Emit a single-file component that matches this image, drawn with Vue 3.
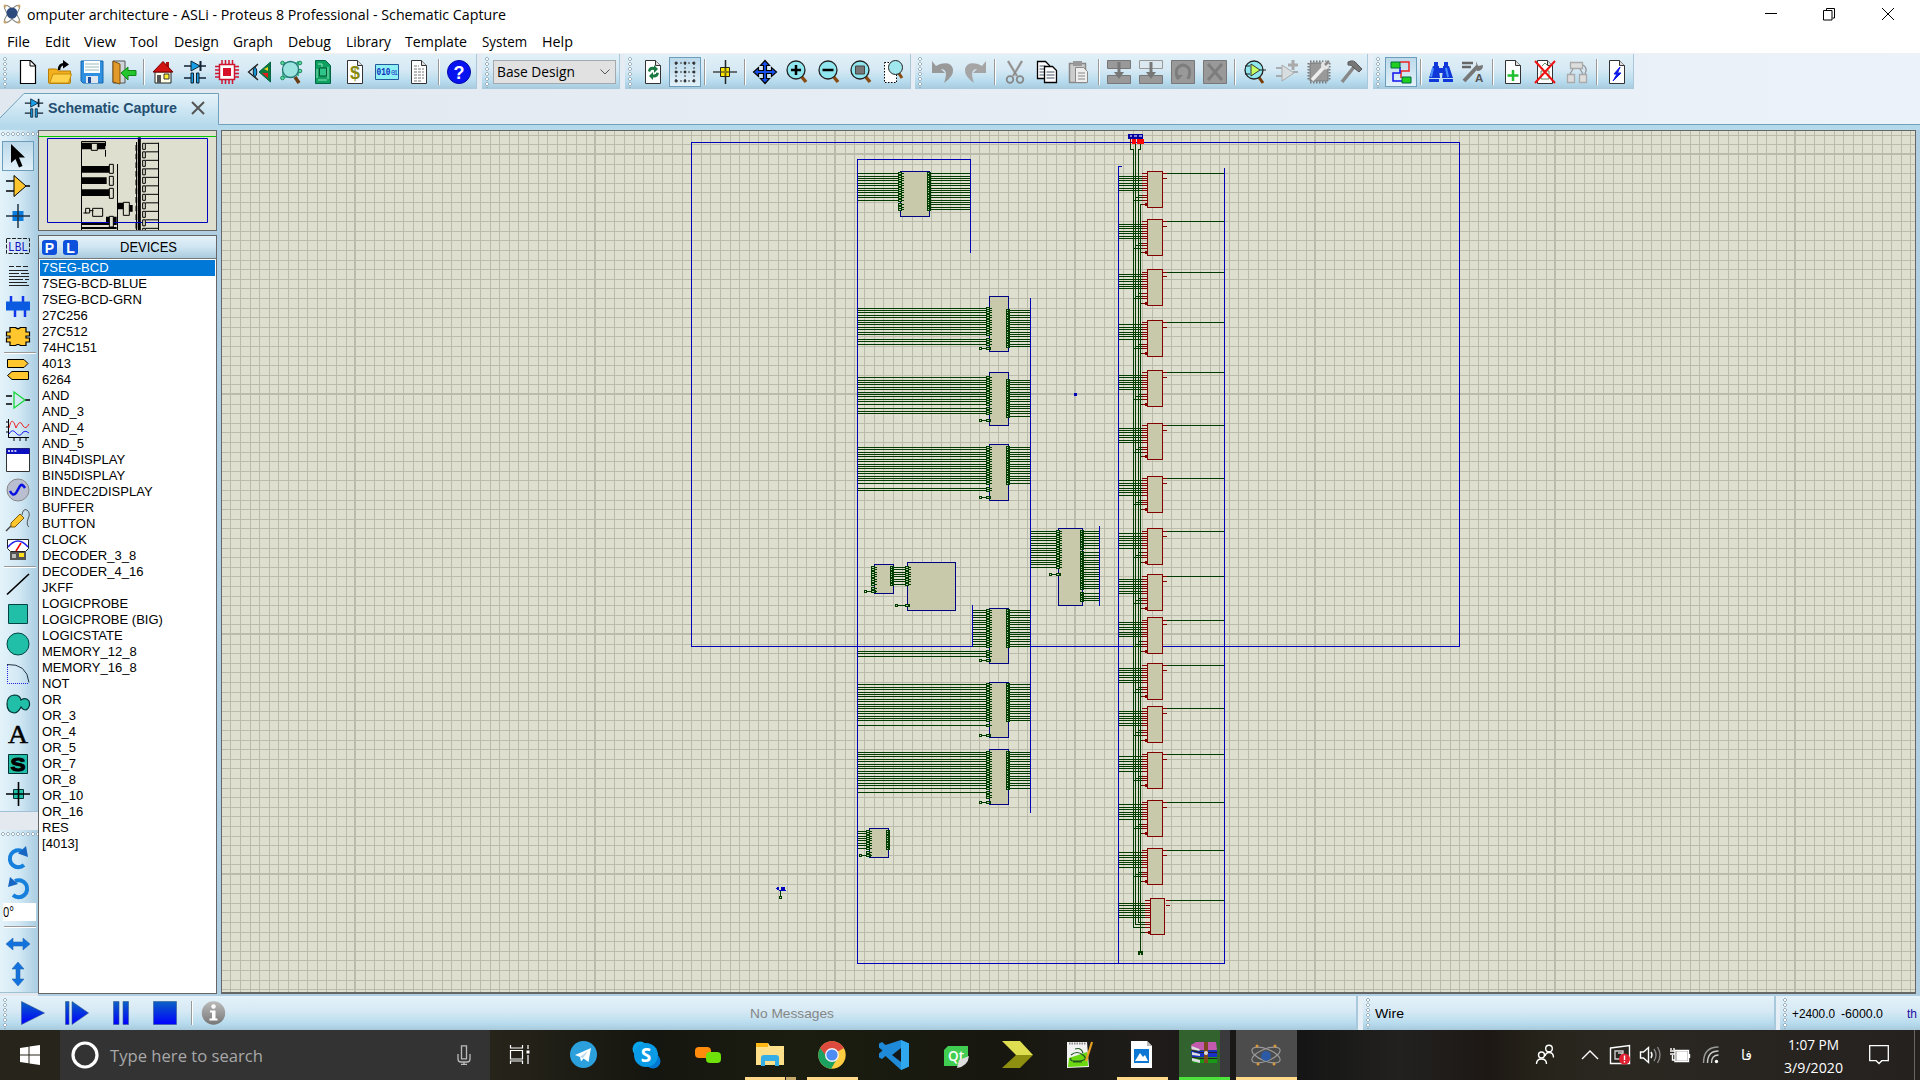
<script setup>
import { h } from 'vue'

// Single line of text set to an exact advance width
const Fit = (p) =>
  h('svg', { width: p.w, height: p.h, style: 'display:block;overflow:visible;flex:none' }, [
    h('text', {
      x: 0, y: p.b, textLength: p.w, lengthAdjust: 'spacingAndGlyphs', fill: p.c || '#000',
      'font-size': p.s, 'font-weight': p.bold ? 700 : 400,
      'font-family': p.arial ? '"Liberation Sans", sans-serif' : '"Open Sans", "Noto Sans", sans-serif'
    }, p.t)
  ])
Fit.props = { w: Number, h: Number, b: Number, s: Number, t: String, c: String, bold: Boolean, arial: Boolean }

const page = '<path d="M4.5 .5h10l5 5v18h-15z" fill="#fff" stroke="#333"/><path d="M14.500 .5v5h5" fill="#ddd" stroke="#333"/>'
const lens = (inner, c = '#8fe6ee') => `<path d="M16 16l5 6" stroke="#8a4b10" stroke-width="3.500"/><circle cx="11" cy="10" r="9" fill="${c}" stroke="#222" stroke-width="1.300"/>${inner}`
const block = (m) => `<path d="M.5 .5h23v23h-23z" fill="#999" stroke="#777"/>${m}`

const icons = {
  new: '<path d="M4.500 .5h10l5 5v18h-15z" fill="#fff" stroke="#000" stroke-width="1.200"/><path d="M14 .5v5.500h5.500" fill="none" stroke="#000"/>',
  open: '<path d="M.5 22V9h8l2 2h12v11q0 1.500-1.500 1.500h-19Q.5 23.500.5 22z" fill="#f2b01c" stroke="#b97d09"/><path d="M2 22l3-8h18.500l-3 9H2z" fill="#ffd24a" stroke="#c48a10"/><path d="M11 10Q11 4 17 4" fill="none" stroke="#000" stroke-width="2.500"/><path d="M15 0l6 4.500-6 4z" fill="#000"/>',
  save: '<path d="M1 1h22v22H3l-2-2z" fill="#2f8fe0" stroke="#1667ad"/><path d="M4 1h16v12H4z" fill="#fff"/><path d="M5 4h14M5 7h14M5 10h14" stroke="#9bb"/><path d="M6 16h12v7H6z" fill="#dfe6ee"/><path d="M8 17h3v6H8z" fill="#1c4fa0"/>',
  exit: '<path d="M1 1h12v22H1z" fill="#cfd6d9" stroke="#555"/><path d="M1 1l7 3v20l-7-2z" fill="#e39a2b" stroke="#7d5312"/><path d="M9 13l7-6v3.500h8v5h-8V20z" fill="#25c52d" stroke="#128418"/>',
  home: '<path d="M4 12h16v11H4z" fill="#ffffe8" stroke="#222"/><path d="M15 2h3v6h-3z" fill="#b01010"/><path d="M2 12L12 1.500 22 12z" fill="#d21313" stroke="#700"/><path d="M6 15h4v8H6z" fill="#555"/><path d="M13 14h5v5h-5z" fill="#ffee30" stroke="#333"/>',
  sch: '<path d="M1 6h22M1 18h7M16 18h7" stroke="#123" stroke-width="1.500"/><path d="M8 1l9 5-9 5z" fill="#17a0e8" stroke="#123"/><path d="M17.500 1v10" stroke="#123" stroke-width="2"/><path d="M8 13h2.500v10H8zM13.500 13H16v10h-2.500z" fill="#17a0e8" stroke="#123"/>',
  pcb: '<path d="M7 0v24M10.500 0v24M14 0v24M17.500 0v24M0 6.500h24M0 10h24M0 13.500h24M0 17h24" stroke="#d01530" stroke-width="1.500"/><path d="M4.500 4.500h15v15h-15z" fill="#fff" stroke="#d01530" stroke-width="1.500"/><path d="M8 8h8v8H8z" fill="#d8112b"/>',
  view3d: '<path d="M11 4L1.500 12l9.500 8" fill="none" stroke="#222" stroke-width="1.300"/><path d="M10 5q-6 7 0 14" fill="#e8f4fa" stroke="#222"/><ellipse cx="8" cy="12" rx="1.800" ry="4.500" fill="#1797d8" stroke="#123"/><path d="M12 12L23.500 2v20z" fill="#0d7a3c" stroke="#064"/><path d="M15 13h6v5z" fill="#e61919"/><path d="M17 9l4-2v4z" fill="#e8d422"/>',
  pcblens: '<path d="M2 3h19M3 17h12M4 8v8M19 1v15" stroke="#2a7" stroke-width="1.500"/><g fill="#5d9" stroke="#286"><circle cx="3.500" cy="3" r="1.800"/><circle cx="21" cy="3" r="1.800"/><circle cx="3.500" cy="18" r="1.800"/><circle cx="21" cy="11" r="1.800"/></g><path d="M16 17l4 6" stroke="#6a3b10" stroke-width="3.500"/><circle cx="11.500" cy="9.500" r="8" fill="#9de4e0" stroke="#277" stroke-width="1.300"/>',
  board: '<path d="M4.500 .5h10l5 5v18h-15z" fill="#10a060" stroke="#064"/><path d="M8.500 8h7v8h-7z" fill="#2fc488" stroke="#053"/><path d="M7 4h4v3M17 7v12M7 20h9M6 9v9" fill="none" stroke="#8fe8c0"/>',
  bom: page + '<text x="12" y="19" text-anchor="middle" font-family="Liberation Sans" font-weight="700" font-size="18" fill="#8a8a10">$</text>',
  bin: '<path d="M.5 4.500h23v15H.5z" fill="#8ff0f5" stroke="#245a9a"/><text x="1.500" y="15" textLength="14" lengthAdjust="spacingAndGlyphs" font-family="Liberation Mono" font-weight="700" font-size="10" fill="#1030c0">010</text><text x="16" y="15" textLength="7" font-family="Liberation Mono" font-size="7" fill="#1030c0">01</text>',
  notes: page + '<path d="M7 6h5M7 9h10M7 12h10M7 15h10M7 18h10M7 21h8" stroke="#777" stroke-dasharray="3 1"/>',
  help: '<circle cx="12" cy="12" r="11.500" fill="#0714f0" stroke="#0508a8"/><text x="12" y="18.500" text-anchor="middle" font-family="Liberation Sans" font-weight="700" font-size="18" fill="#fff">?</text>',
  refresh: page + '<path d="M7 11q1-5 6-4V5l4 4-4 4v-3q-3-1-4 2z" fill="#187a40"/><path d="M18 13q-1 5-6 4.500V20l-4-4 4-4v2.500q3 .5 3.500-2z" fill="#187a40"/>',
  grid: '<path d="M3 3h18M3 12h18M3 21h18M3 3v18M12 3v18M21 3v18" fill="none" stroke="#333" stroke-dasharray="2 2"/><path d="M3 1.500v3M12 1.500v3M21 1.500v3M3 10.500v3M12 10.500v3M21 10.500v3M3 19.500v3M12 19.500v3M21 19.500v3M1.500 3h3M10.500 3h3M19.500 3h3M1.500 12h3M10.500 12h3M19.500 12h3M1.500 21h3M10.500 21h3M19.500 21h3" stroke="#222" stroke-width="1.200"/>',
  origin: '<path d="M7.500 7.500h9v9h-9z" fill="#ffe800" stroke="#222"/><path d="M12.500 0v24" stroke="#222" stroke-width="1.500"/><path d="M0 12h24" stroke="#444" stroke-width="1.500"/><path d="M12 8v8M8 12h8" stroke="#a90"/>',
  pan: '<path d="M12 .5l4.500 5h-3v5h5v-3l5 4.500-5 4.500v-3h-5v5h3L12 23.500l-4.500-5h3v-5h-5v3L.5 12l5-4.500v3h5v-5h-3z" fill="#1650e8" stroke="#000" stroke-width="1.200"/>',
  zin: lens('<path d="M11 5v10M6 10h10" stroke="#000" stroke-width="2.500"/>'),
  zout: lens('<path d="M5.500 10h11" stroke="#000" stroke-width="2.500"/>'),
  zall: lens('<path d="M6.500 6h9v8h-9z" fill="#777" stroke="#444"/>'),
  zarea: '<path d="M3.500 2.500h12v20h-12z" fill="#fff" stroke="#000" stroke-dasharray="1.500 1.500"/><path d="M17 12l4 6" stroke="#8a4b10" stroke-width="3"/><circle cx="14.500" cy="7.500" r="7" fill="#a0e8ee" stroke="#222"/>',
  undo: '<path d="M1 1v12h13l-4-4q8 0 3 14 10-7 9-14-2-8-13-5L5 6z" fill="#999"/>',
  redo: '<path d="M23 1v12H10l4-4q-8 0-3 14Q1 16 2 9q2-8 13-5l4 2z" fill="#a5a5a5"/>',
  cut: '<path d="M5 1l9 15M19 1l-9 15" stroke="#aaa" stroke-width="2.500"/><path d="M5 1l9 15M19 1l-9 15" stroke="#777" stroke-width=".7"/><circle cx="7" cy="19.500" r="3.300" fill="none" stroke="#888" stroke-width="1.800"/><circle cx="17" cy="19.500" r="3.300" fill="none" stroke="#888" stroke-width="1.800"/>',
  copy: '<path d="M2.500 1.500h8l4 4v13h-12z" fill="#fff" stroke="#000" stroke-width="1.300"/><path d="M4.500 6h6M4.500 9h5M4.500 12h5M4.500 15h5" stroke="#456"/><path d="M9.500 6.500h8l4 4v12h-12z" fill="#fff" stroke="#000" stroke-width="1.300"/><path d="M11.500 12h8M11.500 15h8M11.500 18h8" stroke="#456"/>',
  paste: '<path d="M2.500 3.500h16v19h-16z" fill="#ccc" stroke="#888" stroke-width="1.500"/><path d="M6 1h9v5H6z" fill="#999"/><path d="M8.500 7.500h8l4 4v11h-12z" fill="#eee" stroke="#888"/><path d="M11 13h7M11 16h7M11 19h7" stroke="#888"/>',
  bcopy: '<path d="M.5 .5h23v8H.5zM.5 15.500h23v8H.5z" fill="#999" stroke="#777"/><path d="M12 2v12" stroke="#777" stroke-width="3"/><path d="M7 12h10l-5 7z" fill="#777"/>',
  bmove: '<path d="M.5 .5h23v8H.5z" fill="#dbe8f0" stroke="#999"/><path d="M.5 15.500h23v8H.5z" fill="#999" stroke="#777"/><path d="M12 2v12" stroke="#777" stroke-width="3"/><path d="M7 12h10l-5 7z" fill="#777"/>',
  brot: block('<path d="M7 19q-5-12 5-14 10 2 5 14" fill="none" stroke="#7d7d7d" stroke-width="3"/><path d="M4 15h8l-5 5z" fill="#7d7d7d"/>'),
  bdel: block('<path d="M5 4l14 16M19 4L5 20" stroke="#7d7d7d" stroke-width="3"/>'),
  pick: '<path d="M15 16l5 7" stroke="#7a3b00" stroke-width="3"/><circle cx="11" cy="10" r="9" fill="#8fe6ee" stroke="#222" stroke-width="1.300"/><path d="M2 6h5M2 14h5M17 10h6" stroke="#222"/><path d="M8 4l9 6-9 6z" fill="#c8ff60" stroke="#333"/>',
  make: '<path d="M1 8h6M1 16h6M18 12h5" stroke="#999" stroke-width="1.300"/><path d="M7 5l12 8-12 8z" fill="#d8dde0" stroke="#aaa"/><path d="M18 0v10M13 5h10" stroke="#aaa" stroke-width="3"/>',
  pkg: '<path d="M3 3h18v18H3z" fill="#999" stroke="#777"/><path d="M3 1.500h18M3 22.500h18M1.500 3v18M22.500 3v18" stroke="#777" stroke-width="2" stroke-dasharray="1.500 1.500"/><path d="M5 20L18 6" stroke="#eee" stroke-width="3.500"/><circle cx="18" cy="5.500" r="4" fill="#e5e5e5"/><path d="M18 5l4-4" stroke="#888" stroke-width="2.500"/>',
  hammer: '<path d="M3 22L15 7" stroke="#888" stroke-width="3.500"/><path d="M9 2q6-3 9 2l5 5-3 3-5-4q-3-4-6-3z" fill="#777" stroke="#555"/>',
  wire: '<path d="M11 2h9v9h-8v7" fill="none" stroke="#e22" stroke-width="1.500"/><path d="M11 7v6H4v8h9" fill="none" stroke="#11e" stroke-width="1.500"/><path d="M2 2h9v6H2zM13 17h9v6h-9z" fill="#20d020" stroke="#064"/>',
  find: '<path d="M4 6h6v4l1 8H0zM14 6h6l4 12H13l1-8z" fill="#1038d8"/><path d="M5 2h4v5H5zM15 2h4v5h-4z" fill="#1038d8"/><path d="M0 19h10v3H0zM14 19h10v3H14zM10 8h4v5h-4z" fill="#1038d8"/><path d="M4 8l-2 9M17 8l2 9" stroke="#4a90ff" stroke-width="2"/>',
  prop: '<path d="M1 3h11M1 7h9" stroke="#666" stroke-width="2.500"/><path d="M3 21L17 6" stroke="#777" stroke-width="4"/><path d="M15 1l2 5 5-1q0 6-6 6" fill="#777"/><text x="14" y="22" font-family="Liberation Sans" font-weight="700" font-size="11.500" fill="#555">A</text>',
  add: page + '<path d="M12 10v11M6.500 15.500h11" stroke="#20c030" stroke-width="2.500"/>',
  del: page + '<path d="M9 6l3-3 3 3M8 11h8v8H8z" fill="none" stroke="#686"/><path d="M2 1l20 22M22 1L2 23" stroke="#f01010" stroke-width="2"/>',
  hier: '<path d="M5.500 2.500h12v6h-12zM2.500 14.500h7v8h-7zM14.500 14.500h7v8h-7z" fill="#ddd" stroke="#aaa" stroke-width="1.300"/><path d="M8 9l-3 5M15 9l3 5M18 5q5 3 2 9" fill="none" stroke="#999" stroke-width="1.300"/>',
  bolt: page + '<path d="M15 7l-6 7h3l-4 7 8-8h-3.500z" fill="#0a18e8" stroke="#0a18e8"/>',

  arrow: '<path d="M5 0v19l4.500-4 3.500 8.500 3.500-1.500-3.500-8.500H19z" fill="#000"/>',
  comp: '<path d="M0 7h8M0 17h8M19 12h5" stroke="#000" stroke-width="1.300"/><path d="M8 1.500v21L20 12z" fill="#ffc62e" stroke="#000"/>',
  junc: '<path d="M6.500 7h11v10h-11z" fill="#0b7bdc"/><path d="M12 0v24M0 12h24" stroke="#234" stroke-width="1.500"/>',
  lbl: '<path d="M.5 4.500h23v15H.5z" fill="none" stroke="#222" stroke-dasharray="4 1.500"/><text x="2" y="16.500" textLength="20" lengthAdjust="spacingAndGlyphs" font-family="Liberation Mono" font-size="13" fill="#1414c0">LBL</text>',
  script: '<path d="M3 2.500h20" stroke="#222" stroke-dasharray="5 2"/><path d="M3 6.500h19M3 9.500h10M15 9.500h8M3 12.500h20M3 15.500h14M19 15.500h4M3 18.500h18M3 21.500h20" stroke="#222"/>',
  bus: '<path d="M5 2v6M17 2v6M9 16v7M19 16v7" stroke="#1038e8" stroke-width="2.500"/><path d="M0 7.500h24v9H0z" fill="#0a5be0"/>',
  sub: '<path d="M4 3.500h5.500q2.500 2.500 5 0H20V8h3.500v4H20v2h3.500v4H20v3.500h-5.500q-2.500-2-5 0H4V18H.5v-4H4v-2H.5V8H4z" fill="#ffc62e" stroke="#000" stroke-width="1.200"/>',
  term: '<path d="M1.500 1.500H18l4 4-4 4H1.500zM22.500 13.500H6l-4.500 4 4.500 4h16.500z" fill="#ffc62e" stroke="#000"/>',
  pin: '<path d="M0 8h6M0 16h6M19 12h5" stroke="#000" stroke-width="1.300"/><path d="M8 4v16l11-8z" fill="none" stroke="#18d838" stroke-width="1.300"/>',
  graph: '<path d="M2.500 1v18.500H23M0 4h2M0 9h2M0 14h2M8 20v3M14 20v3M20 20v3" fill="none" stroke="#000"/><path d="M3 10q3-14 7 0 4-10 7-2 3 4 6-2" fill="none" stroke="#e22"/><path d="M3 16q3-6 7-1 4 5 7-1 3-2 6 1" fill="none" stroke="#22e"/>',
  win: '<path d="M.5 .5h23v23H.5z" fill="#fff" stroke="#333"/><path d="M.5 .5h23V6H.5z" fill="#0b10c0"/><path d="M2 3h9" stroke="#fff" stroke-width="1.500" stroke-dasharray="2 1.200"/>',
  gen: '<circle cx="12" cy="12" r="11" fill="#b9bfd0" stroke="#888"/><path d="M4 13q3 6 6 2l4-7q2-3 5 2" fill="none" stroke="#0a10e0" stroke-width="2.500"/>',
  probe: '<path d="M0 23l6-6" stroke="#444" stroke-width="1.500"/><path d="M5 15l9-9 4 4-9 9H5z" fill="#ffc62e" stroke="#7a5a10"/><path d="M16 7q1-7 5-5 4 3 1 9-2 6 1 8" fill="none" stroke="#555"/>',
  meter: '<path d="M1.500 1.500h21v9l-3 3h-15l-3-3z" fill="#fff" stroke="#222"/><path d="M2 9q10-12 20 0" fill="none" stroke="#22e" stroke-width="1.500"/><path d="M10 13l5-8" stroke="#e00" stroke-width="1.500"/><path d="M4 14h16v8H4z" fill="#555"/><path d="M13 15h5v4h-5z" fill="#ffe020"/><path d="M6 16h4v4H6z" fill="#bbb"/>',
  line: '<path d="M1 22.500L23 2" stroke="#000" stroke-width="1.700"/>',
  box: '<path d="M2.500 2.500h19v19h-19z" fill="#22bfa8" stroke="#044"/>',
  circ: '<circle cx="12" cy="12" r="11" fill="#22bfa8" stroke="#044"/>',
  arc: '<path d="M1 2.500q20-1 22 18" fill="none" stroke="#234"/><path d="M1.500 3v18.500H23" fill="none" stroke="#22d" stroke-dasharray="1 1"/>',
  path: '<path d="M8 3q6 0 7 5 5-3 8 1 2 6-3 9-3 0-5-3-3 6-7 6-7-1-7-9t7-9z" fill="#22bfa8" stroke="#033" stroke-width="1.200"/>',
  text: '<text x="12" y="21" text-anchor="middle" textLength="20" lengthAdjust="spacingAndGlyphs" font-family="Liberation Serif" font-size="26" fill="#000" stroke="#000" stroke-width=".5">A</text>',
  sym: '<path d="M2.500 2.500h19v19h-19z" fill="#22bfa8" stroke="#033"/><text x="12" y="18.500" text-anchor="middle" textLength="15" lengthAdjust="spacingAndGlyphs" font-family="Liberation Sans" font-weight="700" font-size="18" fill="#000" stroke="#000">S</text>',
  mark: '<path d="M7.500 7.500h10v9h-10z" fill="#22bfa8" stroke="#033"/><path d="M12.500 0v24M0 12h24" stroke="#000" stroke-width="1.600"/>',
  cw: '<path d="M18 20A8.500 8.500 0 1 1 16 6" fill="none" stroke="#1680dc" stroke-width="4"/><path d="M12 8.500L20 1l2 11z" fill="#1766c4"/>',
  ccw: '<path d="M6 20A8.500 8.500 0 1 0 8 6" fill="none" stroke="#1680dc" stroke-width="4" transform="translate(1 0)"/><path d="M12 9L4 2 2 12z" fill="#1766c4"/>',
  fliph: '<path d="M0 12l7-6v4h10V6l7 6-7 6v-4H7v4z" fill="#1271dd" stroke="#2a6ab0" stroke-width=".6"/>',
  flipv: '<path d="M12 0l6 7h-4v10h4l-6 7-6-7h4V7H6z" fill="#1271dd" stroke="#2a6ab0" stroke-width=".6"/>'
}

const bars = [
  { w: 477, mr: 5, items: ['new', 'open', 'save', 'exit', '|', 'home', 'sch', 'pcb', 'view3d', 'pcblens', 'board', 'bom', 'bin', 'notes', '|', 'help'] },
  { w: 138, mr: 5, select: true, items: [] },
  { w: 286, mr: 4, items: ['refresh', 'grid', '|', 'origin', '|', 'pan', 'zin', 'zout', 'zall', 'zarea'] },
  { w: 453, mr: 5, items: ['undo', 'redo', '|', 'cut', 'copy', 'paste', '|', 'bcopy', 'bmove', 'brot', 'bdel', '|', 'pick', 'make', 'pkg', 'hammer'] },
  { w: 261, mr: 0, items: ['wire', '|', 'find', 'prop', '|', 'add', 'del', 'hier', '|', 'bolt'] }
]
const pressed = new Set(['grid', 'wire', 'arrow'])
const modes = ['arrow', 'comp', 'junc', 'lbl', 'script', 'bus', 'sub', '|', 'term', 'pin', 'graph', 'win', 'gen', 'probe', 'meter', '|', 'line', 'box', 'circ', 'arc', 'path', 'text', 'sym', 'mark']

const menu = [['File', 7, 23], ['Edit', 45, 25], ['View', 84, 32], ['Tool', 130, 28], ['Design', 174, 45], ['Graph', 233, 40], ['Debug', 288, 43], ['Library', 346, 45], ['Template', 405, 62], ['System', 482, 45], ['Help', 542, 31]]
  .map(([t, x, w], i, a) => ({ t, w, ml: i ? x - a[i - 1][1] - a[i - 1][2] : x }))

const devices = ['7SEG-BCD', '7SEG-BCD-BLUE', '7SEG-BCD-GRN', '27C256', '27C512', '74HC151', '4013', '6264', 'AND', 'AND_3', 'AND_4', 'AND_5', 'BIN4DISPLAY', 'BIN5DISPLAY', 'BINDEC2DISPLAY', 'BUFFER', 'BUTTON', 'CLOCK', 'DECODER_3_8', 'DECODER_4_16', 'JKFF', 'LOGICPROBE', 'LOGICPROBE (BIG)', 'LOGICSTATE', 'MEMORY_12_8', 'MEMORY_16_8', 'NOT', 'OR', 'OR_3', 'OR_4', 'OR_5', 'OR_7', 'OR_8', 'OR_10', 'OR_16', 'RES', '[4013]']

// ---- schematic geometry (one path per colour, pixel-filled rectangles) ----
const px = (x, y, w, hh) => `M${x} ${y}h${w}v${hh}h${-w}z`
const span = (a, b) => Array.from({ length: b - a + 1 }, (_, i) => a + i)
const row = (b, k) => Math.floor(b + 2.4 * k + 0.001)
let green = '', light = '', red = '', navy = '', fill = '', minor = '', major = ''

for (let k = -90; k < 90; k++) {
  if (k % 25 === 0) {
    major += px(1074 + 9.6 * k, 131, 2, 861) + px(200, 393 + 9.6 * k, 1720, 2)
  } else {
    minor += px(row(1075.6 + 9.6 * k, 0), 131, 1, 861) + px(200, row(394.4 + 9.6 * k, 0), 1720, 1)
  }
}
const outline = (x, y, x2, y2) => px(x, y, x2 - x + 1, 1) + px(x, y2, x2 - x + 1, 1) + px(x, y, 1, y2 - y + 1) + px(x2, y, 1, y2 - y + 1)
const body = (x, y, x2, y2) => { fill += px(x, y, x2 - x + 1, y2 - y + 1); navy += outline(x, y, x2, y2) }
const left = (b, ks, x0, from) => {
  green += px(x0, row(b, ks[0]) - 1, 4, row(b, ks[ks.length - 1]) - row(b, ks[0]) + 3)
  for (const k of ks) {
    green += px(x0 + 4, row(b, k), 2, 1)
    light += px(x0 + 1, row(b, k), 2, 1)
    if (from) green += px(from, row(b, k), x0 - from, 1)
  }
}
const right = (b, ks, x0, to) => {
  green += px(x0, row(b, ks[0]) - 1, 4, row(b, ks[ks.length - 1]) - row(b, ks[0]) + 3)
  for (const k of ks) {
    light += px(x0 + 1, row(b, k), 1, 1)
    if (to) green += px(x0 + 4, row(b, k), to - x0 - 4, 1)
  }
}
const clock = (x, y, x0) => {
  green += outline(x, y - 1, x + 2, y + 1) + px(x + 3, y, x0 - x - 3, 1)
  green += px(x0, y - 1, 5, 3)
  light += px(x0 + 1, y, 2, 1)
}
const cpu = (top, bottom, b, groups, ck) => {
  body(989, top, 1008, bottom)
  groups.forEach((g) => left(b, span(g[0], g[1]), 986, g[2]))
  clock(979, row(b, ck), 986)
}
cpu(296, 351, 308, [[0, 11, 857], [13, 15, 857]], 17); right(308, span(1, 16), 1006, 1030)
cpu(372, 425, 377.6, [[0, 11, 857], [13, 15, 857]], 18); right(377.6, span(1, 16), 1006, 1030)
cpu(444, 500, 447.2, [[0, 15, 857], [17, 18, 857]], 21); right(447.2, span(0, 15), 1006, 1030)
cpu(608, 663, 610.4, [[0, 15, 972], [17, 19, 857]], 21); right(610.4, span(0, 15), 1006, 1030)
cpu(682, 737, 684.8, [[0, 15, 857], [17, 17, 857]], 21); right(684.8, span(0, 15), 1006, 1030)
cpu(749, 804, 752, [[0, 15, 857], [17, 17, 857], [18, 19, 0]], 21); right(752, span(0, 15), 1006, 1030)

body(900, 171, 929, 216)
left(173.6, span(0, 11), 898, 857); left(173.6, span(13, 15), 898, 0)
right(173.6, span(0, 15), 927, 970)
body(1058, 528, 1082, 605)
left(531.2, span(0, 15), 1056, 1030); clock(1049, 574, 1056)
right(531.2, span(0, 7), 1080, 1099); right(531.2, span(9, 24), 1080, 1099); right(531.2, span(26, 29), 1080, 1099)
body(874, 564, 893, 593)
left(567.2, span(0, 7), 871, 0); left(567.2, span(9, 10), 871, 0); clock(864, 591, 871)
right(567.2, span(0, 7), 890, 905)
body(907, 562, 955, 610)
left(567.2, span(0, 7), 905, 0); clock(895, 605, 905)
body(869, 828, 888, 857)
left(831.2, span(0, 7), 866, 857); left(831.2, span(9, 10), 866, 0); clock(859, 855, 866)
right(831.2, span(0, 7), 886, 0)

const muxes = [173.6, 221.6, 272, 322.4, 372.8, 425.6, 478.4, 531.2, 576.8, 620, 665.6, 708.8, 754.4, 802.4, 850.4, 900.8]
muxes.forEach((b, i) => {
  const s = i === 15 ? 3 : 0
  const t = row(b - 2.4, 0), e = row(b, 14)
  fill += px(1147 + s, t, 16 - (s ? 1 : 0), e - t + 1)
  red += outline(1147 + s, t, 1162 + s - (s ? 1 : 0), e)
  red += px(1142 + s, row(b, 0), 5, 1) + px(1163 + s, row(b, 0), 4, 1) + px(1163 + s, row(b, 2), 4, 1)
  green += px(1167 + s, row(b, 0), 57 - s, 1)
  for (const k of span(1, 7)) { green += px(1118, row(b, k), 24 + s, 1); red += px(1142 + s, row(b, k), 5, 1) }
  ;[1138, 1135, 1133].forEach((x, j) => { green += px(x, row(b, 9 + j), 1142 + s - x, 1); red += px(1142 + s, row(b, 9 + j), 5, 1) })
  green += px(1140, row(b, 13), 3 + s, 1)
  red += px(1142 + s, row(b, 13), 3, 1) + px(1145 + s, row(b, 13) - 1, 2, 3)
})
green += px(1133, 149, 1, 779) + px(1135, 143, 1, 782) + px(1138, 149, 1, 774) + px(1140, 204, 1, 747)
green += px(1130, 144, 1, 6) + px(1130, 149, 4, 1) + px(1140, 144, 1, 6) + px(1138, 149, 3, 1) + px(1138, 951, 5, 4)
light += px(1140, 953, 1, 2)
red += px(1130, 139, 1, 5)
const sheet = outline(691, 142, 1459, 646)
const frame = px(857, 159, 1, 805) + px(857, 159, 114, 1) + px(970, 159, 1, 94) + px(857, 963, 368, 1) + px(1224, 168, 1, 796) +
  px(1118, 166, 1, 798) + px(1118, 166, 4, 1) + px(1030, 298, 1, 515) + px(972, 605, 1, 42) + px(1099, 526, 1, 80) + px(1074, 393, 3, 3)

// row offsets of the selector column in the overview
const mux = Array.from({ length: 11 }, (_, i) => 70 + i * 25.5)
</script>

<template>
  <div class="app">
    <header class="title">
      <svg class="logo" width="20" height="20" viewBox="0 0 20 20"><g fill="none" stroke="#888" stroke-width="1.100"><ellipse cx="10" cy="10" rx="11" ry="3.500" transform="rotate(50 10 10)" /><ellipse cx="10" cy="10" rx="11" ry="3.500" transform="rotate(-50 10 10)" /></g><circle cx="10" cy="9" r="5.500" fill="#2c4a7c" /><g fill="#c9a76a"><circle cx="3" cy="2" r="1.500" /><circle cx="17" cy="2" r="1.500" /><circle cx="3" cy="18" r="1.500" /><circle cx="17" cy="18" r="1.500" /></g></svg>
      <Fit :w="479" :h="29" :b="20" :s="15" t="omputer architecture - ASLi - Proteus 8 Professional - Schematic Capture" />
      <svg class="winbtns" width="155" height="29" viewBox="1765 0 155 29" fill="none" stroke="#000"><path d="M1765 13.500h12M1826.500 10V8.500h8v9.500h-2M1823.500 10.500h8.500v9.500h-8.500zM1882 8l12 12M1894 8l-12 12" /></svg>
    </header>
    <nav class="menu">
      <span v-for="m in menu" :key="m.t" :style="{ marginLeft: m.ml + 'px' }"><Fit :w="m.w" :h="24" :b="18" :s="15" :t="m.t" /></span>
    </nav>

    <div class="toolbars">
      <div v-for="(b, i) in bars" :key="i" class="bar" :class="{ wide: i > 1 }" :style="{ width: b.w + 'px', marginRight: b.mr + 'px' }">
        <i class="grip"></i>
        <div v-if="b.select" class="select">
          <Fit :w="78" :h="22" :b="16" :s="14.500" t="Base Design" />
          <svg width="10" height="6" fill="none" stroke="#555"><path d="M.5 .5L5 5 9.500 .5" /></svg>
        </div>
        <template v-for="(n, j) in b.items" :key="j">
          <i v-if="n === '|'" class="sep"></i>
          <span v-else class="slot" :class="{ on: pressed.has(n) }"><svg width="24" height="24" viewBox="0 0 24 24" fill="none" v-html="icons[n]"></svg></span>
        </template>
      </div>
    </div>

    <div class="tabs">
      <svg width="1920" height="41" class="tabshape"><defs><linearGradient id="tg" x1="0" y1="0" x2="0" y2="1"><stop offset="0" stop-color="#e6f3fa" /><stop offset="1" stop-color="#b6daec" /></linearGradient></defs>
        <path d="M0 35.500h1920V41H0z" fill="#b4d9eb" /><path d="M0 29L24 4.500H218.500V36H0z" fill="url(#tg)" /><path d="M0 29L24 4.500H218.500V35.500H1920" fill="none" stroke="#6fa0bc" /></svg>
      <div class="tab">
        <svg width="20" height="20" viewBox="0 0 24 24" fill="none" v-html="icons.sch"></svg>
        <Fit :w="129" :h="22" :b="16" :s="14" bold arial c="#234e70" t="Schematic Capture" />
        <svg class="x" width="14" height="14" stroke="#555" stroke-width="2"><path d="M1 1l12 12M13 1L1 13" /></svg>
      </div>
    </div>

    <main class="work">
      <aside class="modes">
        <div class="modebar first">
          <i class="hgrip"></i>
          <template v-for="(n, j) in modes" :key="j">
            <i v-if="n === '|'" class="hsep"></i>
            <span v-else class="mslot" :class="{ on: pressed.has(n) }"><svg width="24" height="24" viewBox="0 0 24 24" fill="none" v-html="icons[n]"></svg></span>
          </template>
        </div>
        <div class="modebar second">
          <i class="hgrip"></i>
          <span class="mslot"><svg width="24" height="24" viewBox="0 0 24 24" fill="none" v-html="icons.cw"></svg></span>
          <span class="mslot"><svg width="24" height="24" viewBox="0 0 24 24" fill="none" v-html="icons.ccw"></svg></span>
          <div class="angle"><Fit :w="11" :h="18" :b="14" :s="14" t="0°" /></div>
          <i class="hsep"></i>
          <span class="mslot"><svg width="24" height="24" viewBox="0 0 24 24" fill="none" v-html="icons.fliph"></svg></span>
          <span class="mslot"><svg width="24" height="24" viewBox="0 0 24 24" fill="none" v-html="icons.flipv"></svg></span>
        </div>
      </aside>

      <section class="side">
        <div class="overview">
          <svg width="177" height="99" viewBox="117 33 531 297" fill="none" stroke="#000" stroke-width="3">
            <path d="M117 49.500H648" stroke="#00c800" />
            <path d="M244.500 330V64.500H316.500V78M316.500 90V110M352.500 132V330M409.500 66V330M475.500 68V330" />
            <path d="M246 78H316M246 148H328M246 182H320M246 218H328M354 258H372M384 265H398M318 300H350" stroke-width="20" />
            <path d="M246 312H350M246 324H350" stroke-width="6" />
            <path d="M418 52V330" stroke-width="9" /><path d="M409 75V330" stroke-width="5" stroke-dasharray="17 9" />
            <path d="M142.500 55.500H622.500V307.500H142.500z" stroke="#0000c0" />
            <g fill="#dfdfd0"><path d="M274 70h18v21h-18zM328 133h12v27h-12zM328 169h12v27h-12zM328 205h12v30h-12zM278 265h30v24h-30zM257 265h12v14h-12zM370 247h18v39h-18zM328 289h12v32h-12z" /></g>
            <path d="M250 279h9M268 272h12" />
            <path v-for="y in mux" :key="y" :d="`M428 ${y}h8v18h-8zM437 ${y}H475`" fill="#dfdfd0" />
          </svg>
        </div>
        <div class="devices">
          <div class="dhead">
            <b>P</b><b>L</b>
            <div class="dt"><Fit :w="57" :h="22" :b="16" :s="14" arial t="DEVICES" /></div>
          </div>
          <ul>
            <li v-for="(d, i) in devices" :key="d" :class="{ sel: i === 0 }">{{ d }}</li>
          </ul>
        </div>
      </section>

      <section class="canvas">
        <svg width="1693" height="861" viewBox="222 131 1693 861" shape-rendering="crispEdges">
          <path :d="minor" fill="#bbbbab" /><path :d="major" fill="#bbbbab" />
          <path :d="sheet" fill="#0000b8" /><path :d="fill" fill="#c8c8aa" />
          <path :d="navy" fill="#000082" />
          <path :d="green" fill="#003c00" /><path :d="light" fill="#b4d2a8" /><path :d="red" fill="#820000" />
          <path :d="frame" fill="#0000b8" />
          <path d="M1128 134h15v5h-15z" fill="#0000a0" /><path d="M1130 135h2v2h-2zM1134 135h3v2h-3zM1139 135h3v2h-3z" fill="#8888d8" /><path d="M1132 139h4v5h-4zM1137 139h7v5h-7z" fill="#f00" />
          <path d="M776 888h3v1h-3zM777 887h2v3h-2zM781 887h4v4h-4zM779 890h7v1h-7z" fill="#0000c0" /><path d="M780 891h1v5h-1zM779 896h3v1h-3zM779 898h3v1h-3zM779 897h1v1h-1zM781 897h1v1h-1z" fill="#003c00" />
        </svg>
      </section>
    </main>

    <footer class="status">
      <div class="sbar sim"><i class="grip"></i>
        <svg width="222" height="24" viewBox="12 0 222 24"><defs><linearGradient id="bg" x1="0" y1="0" x2="0" y2="1"><stop offset="0" stop-color="#0b62c4" /><stop offset="1" stop-color="#0000ff" /></linearGradient><linearGradient id="ig" x1="0" y1="0" x2="0" y2="1"><stop offset="0" stop-color="#bbb" /><stop offset="1" stop-color="#777" /></linearGradient></defs>
          <g fill="url(#bg)" stroke="#345a8c" stroke-width=".6"><path d="M21.500 .5L44.500 12 21.500 23.500z" /><path d="M65.500 .5h3.500v23h-3.500zM72 .5L88.500 12 72 23.500z" /><path d="M113.500 .5h5.500v23h-5.500zM123 .5h5.500v23H123z" /><path d="M153.500 .5h23v23h-23z" /></g>
          <path d="M191.500 0v24" stroke="#999" /><path d="M192.500 0v24" stroke="#fff" /><circle cx="213.500" cy="12" r="11.700" fill="url(#ig)" />
          <circle cx="213.500" cy="5.500" r="2.200" fill="#fff" /><path d="M210 9.500h5.500v8h2v2h-8v-2h2.500v-6H210z" fill="#fff" /></svg>
        <div class="msg"><Fit :w="84" :h="24" :b="17" :s="13.500" arial c="#868686" t="No Messages" /></div>
      </div>
      <div class="sbar wire"><i class="grip"></i><Fit :w="29" :h="24" :b="17" :s="13.500" arial t="Wire" /></div>
      <div class="sbar pos"><i class="grip"></i><Fit :w="43" :h="24" :b="17" :s="13.500" arial t="+2400.0" /><Fit :w="42" :h="24" :b="17" :s="13.500" arial t="-6000.0" /><Fit :w="10" :h="24" :b="17" :s="13.500" arial c="#1a0aa0" t="th" /></div>
    </footer>

    <div class="taskbar">
      <div class="start"><svg width="20" height="20" fill="#fff"><path d="M0 3l8.500-1.200v7.700H0zM9.500 1.600L20 0v9.500H9.500zM0 10.500h8.500v7.700L0 17zM9.500 10.500H20V20L9.500 18.400z" /></svg></div>
      <div class="search">
        <svg width="28" height="28"><circle cx="14" cy="14" r="12" fill="none" stroke="#fff" stroke-width="3.200" /></svg>
        <div class="ph"><Fit :w="153" :h="50" :b="32" :s="17" c="#a8a8a8" t="Type here to search" /></div>
        <svg width="14" height="20" fill="none" stroke="#bbb" stroke-width="1.300"><path d="M4.500 .8h5v13h-5zM1 9v5q0 3 3 3h6q3 0 3-3V9M7 17v3M4 19.500h6" /></svg>
      </div>
      <svg class="apps" width="807" height="50" viewBox="490 1030 807 50">
        <path d="M1179 1030h41v47h-41z" fill="#32632f" /><path d="M1220 1030h10v47h-10z" fill="#3a3a3c" /><path d="M1236 1030h61v47h-61z" fill="#4c4c4d" />
        <path d="M745 1077h40v3h-40zM807 1077h51v3h-51zM1117 1077h51v3h-51zM1236 1077h61v3h-61z" fill="#ffd98a" /><path d="M786 1077h10v3h-10z" fill="#c8aa6c" /><path d="M1179 1077h51v3h-51z" fill="#4ce43a" />
        <g fill="none" stroke="#fff" stroke-width="1.200"><path d="M510.500 1045v3h12v-3M510.500 1064v-3h12v3M510.500 1050.500h12v8.500h-12zM528 1045v4M528 1055v9" /></g><path d="M526.500 1050.500h3v3h-3z" fill="#fff" />
        <circle cx="583.500" cy="1054.500" r="13.500" fill="#2ba0dc" /><path d="M575 1055l16-7-2.500 14-5-3.500-2.500 3-1-4.500z" fill="#fff" /><path d="M580 1057l8-6-5 7z" fill="#b8d8ea" />
        <circle cx="640" cy="1049" r="7.500" fill="#0aa6ea" /><circle cx="653" cy="1061" r="7.500" fill="#0078d4" /><circle cx="646" cy="1055" r="12" fill="#0a9be6" /><text x="646" y="1062" text-anchor="middle" font-family="Open Sans" font-weight="700" font-size="19" fill="#fff">S</text>
        <rect x="695" y="1047" width="16" height="11" rx="4" fill="#ff8c0a" /><rect x="706" y="1052" width="15" height="11" rx="4" fill="#6ee00a" />
        <path d="M756 1043h12l2 3h14v19h-28z" fill="#ffe08a" /><path d="M756 1043h12v4h-12z" fill="#fcb714" /><path d="M761 1066v-8q0-3 3-3h12q3 0 3 3v8h-4v-5h-10v5z" fill="#35aee8" />
        <circle cx="832" cy="1055" r="13.700" fill="#ffcd40" /><path d="M832 1055L820.200 1048A13.700 13.700 0 0 1 843.800 1048z" fill="#dd4b3e" /><path d="M820.200 1048a13.700 13.700 0 0 0 11 20.700L838 1057l-6-2z" fill="#1ba160" /><path d="M820.200 1048q5-6.700 11.800-6.700t11.800 6.700H832l-6 8z" fill="#dd4b3e" /><circle cx="832" cy="1055" r="6.300" fill="#4d8bf5" stroke="#f2f2f2" stroke-width="1.400" />
        <path d="M901 1040l8 3.500v23l-8 3.500-15.500-14-3.500 3-3-1.500v-4l3.500-3-3.500-3v-4l3-1.500 3.500 3z" fill="#1f8ad8" /><path d="M901 1048v14l-9-7z" fill="#15181a" /><path d="M901 1040l8 3.500v23l-8 3.500z" fill="#2fa8f0" />
        <path d="M944 1050l4-4h20v14l-7 6h-17z" fill="#41cd52" /><text x="948" y="1061" textLength="16" lengthAdjust="spacingAndGlyphs" font-family="Open Sans" font-weight="600" font-size="15" fill="#fff">Qt</text><path d="M969 1056q-1 10-12 12l2-8z" fill="#ddd" />
        <path d="M1002 1041h18l13 14h-17z" fill="#dede50" /><path d="M1016 1055h17l-13 13h-18z" fill="#8e8e10" />
        <path d="M1067 1042h20l2 25-22 1z" fill="#f2f2f2" /><path d="M1069 1058q9-3 18-6l1 14-20 1z" fill="#6cd812" /><path d="M1069 1043.500h17" stroke="#888" stroke-width="2" stroke-dasharray="1.500 1" /><path d="M1071 1055q6-5 12 0t-4 6-8-3M1075 1049q6-2 8 4M1073 1062h9" fill="none" stroke="#252" stroke-width="1.200" /><path d="M1092 1042l-6 19" stroke="#e8a020" stroke-width="2.200" />
        <path d="M1131 1041h16l5 5v22h-21z" fill="#fff" /><path d="M1147 1041v5h5z" fill="#bbb" /><path d="M1134 1049h15v14h-15z" fill="#0d78d4" /><path d="M1135 1061l5-8 3 4 2-2 3 6z" fill="#fff" />
        <path d="M1191 1045l5-3h20l1 8h-25z" fill="#c45aae" /><path d="M1191 1051l26-1v7h-25z" fill="#1a2ec8" /><path d="M1192 1058l25-1v6h-24z" fill="#189a18" />
        <path d="M1191.500 1046l8 3v2l-8-2zM1192 1052l8 2v2l-8-1zM1192 1058l8 2v3l-8-2z" fill="#ddd" /><path d="M1192 1050.500l8 2h17M1192 1057l8 1.500h17" fill="none" stroke="#222" /><path d="M1204 1042h4v21h-4z" fill="#7c4a1e" /><circle cx="1206" cy="1053" r="2" fill="#ddd" />
        <g fill="none" stroke="#999" stroke-width="1.200"><ellipse cx="1266" cy="1055" rx="15" ry="6" transform="rotate(22 1266 1055)" /><ellipse cx="1266" cy="1055" rx="15" ry="6" transform="rotate(-22 1266 1055)" /></g><circle cx="1266" cy="1056" r="5" fill="#2c5aa4" /><g fill="#d8973a"><circle cx="1257" cy="1046" r="1.500" /><circle cx="1275" cy="1046" r="1.500" /><circle cx="1258" cy="1064" r="1.500" /><circle cx="1274" cy="1064" r="1.500" /></g>
      </svg>
      <svg class="tray" width="200" height="50" viewBox="1530 1030 200 50" fill="none" stroke="#fff" stroke-width="1.400">
        <circle cx="1541.500" cy="1055" r="3" /><circle cx="1549" cy="1048.500" r="3.300" /><path d="M1536.500 1064q0-5 5-5t5 5M1545 1056q1-3.500 4-3.500 4.500 0 4.500 5" />
        <path d="M1582 1059l8-8 8 8" />
        <path d="M1610.500 1048l19-2.500v18h-19z" /><path d="M1615 1051h8v8h-8zM1618 1053h4v5" stroke="#ccc" /><circle cx="1624.500" cy="1059" r="5.500" fill="#e02030" stroke="none" /><path d="M1624.500 1055.500v4.500M1624.500 1061v1.500" />
        <path d="M1640.500 1052h3l5-4.500v15l-5-4.500h-3zM1651 1052q2 3 0 6" /><path d="M1654 1049q4 6 0 12M1657.500 1047q5 8 0 16" stroke="#888" />
        <path d="M1675 1050.500h13.500v11h-13.500zM1689.500 1054v4M1671 1048v2M1674 1048v2M1670 1051h5v3h-5M1672.500 1055v5h3" /><path d="M1677 1052h10v8h-10z" fill="#fff" />
        <path d="M1707.500 1063q0-12 11-12M1711.500 1063q0-8 7-8" stroke="#ccc" /><path d="M1703.500 1063q0-16 15-16" stroke="#999" /><circle cx="1716.500" cy="1061.500" r="1.700" fill="#fff" stroke="none" />
      </svg>
      <div class="lang">فا</div>
      <div class="clock"><Fit :w="51" :h="23" :b="18" :s="15" c="#fff" t="1:07 PM" /><Fit :w="59" :h="23" :b="18" :s="15" c="#fff" t="3/9/2020" /></div>
      <svg class="note" width="20" height="20" fill="none" stroke="#fff" stroke-width="1.300"><path d="M.7 .7h18.600v15h-6.500L10 18.500l-2.800-2.800H.7z" /></svg>
      <i class="peek"></i>
    </div>
  </div>
</template>

<style>
body { margin: 0; overflow: hidden; }
</style>
<style scoped>
.app { width: 1920px; height: 1080px; display: flex; flex-direction: column; overflow: hidden; background: #e4eaf0; font-family: "Liberation Sans", sans-serif; }
.app svg { flex: none; display: block; }
.slot svg, .mslot svg { overflow: visible; }
.title { height: 29px; background: #fff; display: flex; }
.logo { margin: 4px 5px 0 2px; }
.winbtns { margin-left: auto; }
.menu { height: 24px; background: #fff; display: flex; }
.toolbars { height: 36px; display: flex; align-items: stretch; background: linear-gradient(90deg, #e1e8ef, #ebf2fa); border-top: 1px solid #f0f0f0; box-sizing: border-box; }
.bar { box-sizing: border-box; display: flex; align-items: center; background: linear-gradient(#e2f1f8, #d6e9f4 45%, #b6dbee 80%, #a8c9dc); border-right: 1px solid #a9c8da; }
.grip { width: 12px; height: 32px; flex: none; background: radial-gradient(circle at 5px 3px, #fff 1px, #9ab0bf 1.6px, transparent 2px) 0 0 / 12px 5px; }
.slot { width: 32px; height: 30px; box-sizing: border-box; display: flex; align-items: center; justify-content: center; flex: none; }
.on { background: linear-gradient(#bcd9ea, #e2f1f9); border: 1px solid #6d9dbb; }
.sep { width: 2px; height: 26px; margin: 0 2.700px; flex: none; background: linear-gradient(90deg, #999 50%, #fff 50%); }
.wide .sep { margin: 0 3px; }
.select { width: 123px; height: 24px; box-sizing: border-box; border: 1px solid #a3a9ad; background: #e1e1e1; display: flex; align-items: center; justify-content: space-between; padding: 0 5px 0 3px; margin-left: -1px; }
.tabs { height: 41px; background: linear-gradient(90deg, #e1e8ef, #ebf2fa); position: relative; }
.tabshape { position: absolute; left: 0; top: 0; }
.tab { position: relative; display: flex; align-items: center; padding: 8px 0 0 24px; width: 190px; height: 22px; gap: 4px; }
.tab .x { margin-left: 10px; }
.work { height: 866px; display: flex; background: #b0cfe2; overflow: hidden; }
.modes { width: 38px; display: flex; flex-direction: column; justify-content: space-between; background: #e3e9ef; }
.modebar { background: linear-gradient(90deg, #e4f3fa, #d2e8f4 50%, #a9cde2); display: flex; flex-direction: column; align-items: flex-start; box-sizing: border-box; border-bottom: 1px solid #9fc0d5; }
.first { height: 682px; }
.second { height: 163px; margin-bottom: 3px; }
.hgrip { width: 38px; height: 11px; flex: none; background: radial-gradient(circle at 3px 4px, #fff 1px, #9ab0bf 1.6px, transparent 2px) 0 0 / 5px 11px; }
.second .hgrip { height: 12px; }
.mslot { width: 32px; height: 30px; margin-left: 2px; box-sizing: border-box; display: flex; align-items: center; justify-content: center; flex: none; }
.hsep { width: 32px; height: 2px; margin: 1px 0 1px 4px; flex: none; background: linear-gradient(#999 50%, #fff 50%); }
.angle { width: 33px; height: 18px; margin: 1px 0 4px 3px; background: #fff; flex: none; }
.side { width: 180px; display: flex; flex-direction: column; }
.overview { width: 177px; height: 99px; border: 1px solid #666; background: #dfdfd0; overflow: hidden; margin-bottom: 4px; }
.devices { width: 177px; height: 757px; border: 1px solid #666; background: #fff; }
.dhead { height: 22px; border-bottom: 1px solid #777; background: linear-gradient(#e4f2f9, #cfe5f2 50%, #a9cbde); display: flex; align-items: center; }
.dhead b { width: 15px; height: 15px; border-radius: 3px; background: #0c50dc; color: #fff; font: 700 14px/16px "Liberation Sans", sans-serif; text-align: center; margin-left: 3px; margin-right: 3px; }
.dt { margin-left: 39px; }
ul { list-style: none; margin: 0; padding: 1px 1px 0; }
li { height: 16px; line-height: 16px; font-size: 13px; letter-spacing: .02px; padding-left: 2px; color: #000; white-space: nowrap; }
li.sel { background: #0078d7; color: #fff; }
.canvas { width: 1693px; height: 861px; margin-left: 3px; border: 1px solid #666; border-bottom-width: 2px; background: #dfdfd0; overflow: hidden; flex: none; }
.status { height: 34px; display: flex; background: #e6eff6; }
.sbar { box-sizing: border-box; height: 34px; display: flex; align-items: center; background: linear-gradient(#e4f2f9, #d6e9f4 45%, #b8dcee 80%, #a8c9dc); border-right: 2px solid #a8c8db; }
.sim { width: 1358px; margin-right: 5px; }
.msg { margin-left: 516px; }
.wire { width: 413px; margin-right: 4px; }
.pos { width: 140px; border: 0; gap: 6px; }
.pos .grip { margin-right: -6px; }
.pos > svg:last-child { margin-left: 18px; }
.taskbar { height: 50px; display: flex; align-items: center; background: linear-gradient(90deg, #26241b 0, #28251b 480px, #15160f 650px, #1b1d10 800px, #17170f 1000px, #1f1c1a 1150px, #151515 1300px, #222120 1400px, #1d1814 1490px, #26241a 1540px, #2b2822 1620px, #24211f 1920px); }
.start { width: 60px; display: flex; justify-content: center; }
.search { width: 430px; height: 50px; background: #333; display: flex; align-items: center; box-sizing: border-box; padding: 0 19px 0 11px; }
.ph { margin-left: 11px; margin-right: auto; }
.tray { margin-left: 233px; }
.lang { width: 12px; margin-left: 11px; color: #fff; font: 14px/20px "DejaVu Sans", sans-serif; white-space: nowrap; }
.clock { width: 60px; margin-left: 30px; display: flex; flex-direction: column; align-items: center; }
.note { margin-left: 26px; }
.peek { width: 1px; height: 50px; margin-left: auto; margin-right: 5px; background: #666; }
</style>
